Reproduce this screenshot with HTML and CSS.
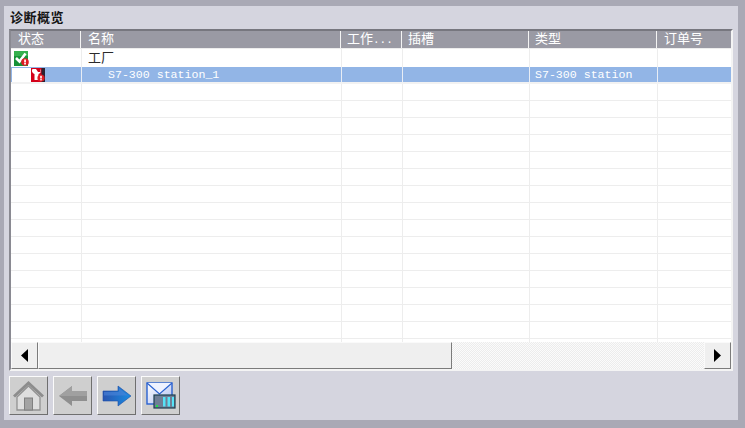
FILE: index.html
```html
<!DOCTYPE html>
<html lang="zh">
<head>
<meta charset="utf-8">
<title>诊断概览</title>
<link rel="stylesheet" href="styles.css">
</head>
<body>
<main class="panel">
  <h1 class="title">诊断概览</h1>
  <section class="table">
    <div class="row head">
      <div class="c c1">状态</div><div class="c c2">名称</div><div class="c c3">工作<span class="dots">...</span></div><div class="c c4">插槽</div><div class="c c5">类型</div><div class="c c6">订单号</div>
    </div>
    <div class="rows">
      <div class="row first">
        <div class="c c1"><svg class="ico" width="15" height="15" viewBox="0 0 15 15"><rect width="14" height="15" fill="#179238"/><rect width="14" height="5" fill="#35b04e"/><path d="M2 7 5.500 10.500 11.500 2.500" fill="none" stroke="#fff" stroke-width="2.600"/><circle cx="11" cy="11" r="3.800" fill="#e01b24"/><rect x="10.200" y="8.500" width="1.700" height="3" fill="#fff"/><rect x="10.200" y="12" width="1.700" height="1.500" fill="#fff"/></svg></div>
        <div class="c c2 cn"><span class="cn-text">工厂</span></div><div class="c c3"></div><div class="c c4"></div><div class="c c5"></div><div class="c c6"></div>
      </div>
      <div class="row sel">
        <div class="c c1"><span class="blank"></span><svg width="14" height="14" viewBox="0 0 14 14"><rect width="14" height="14" fill="#2b2230"/><rect width="10.500" height="14" fill="#d4001a"/><path d="M1.500 1a3.300 3.300 0 0 0 2 5V12h4V6a3.300 3.300 0 0 0 2-5v3H7L5 1z" fill="#fff"/><circle cx="10" cy="10" r="3.600" fill="#e01b24"/><rect x="9.200" y="7.800" width="1.600" height="2.700" fill="#fff"/><rect x="9.200" y="11.100" width="1.600" height="1.300" fill="#fff"/></svg></div>
        <div class="c c2 mono indent">S7-300 station_1</div><div class="c c3"></div><div class="c c4"></div><div class="c c5 mono">S7-300 station</div><div class="c c6"></div>
      </div>
      <div class="row"><div class="c c1"></div><div class="c c2"></div><div class="c c3"></div><div class="c c4"></div><div class="c c5"></div><div class="c c6"></div></div>
      <div class="row"><div class="c c1"></div><div class="c c2"></div><div class="c c3"></div><div class="c c4"></div><div class="c c5"></div><div class="c c6"></div></div>
      <div class="row"><div class="c c1"></div><div class="c c2"></div><div class="c c3"></div><div class="c c4"></div><div class="c c5"></div><div class="c c6"></div></div>
      <div class="row"><div class="c c1"></div><div class="c c2"></div><div class="c c3"></div><div class="c c4"></div><div class="c c5"></div><div class="c c6"></div></div>
      <div class="row"><div class="c c1"></div><div class="c c2"></div><div class="c c3"></div><div class="c c4"></div><div class="c c5"></div><div class="c c6"></div></div>
      <div class="row"><div class="c c1"></div><div class="c c2"></div><div class="c c3"></div><div class="c c4"></div><div class="c c5"></div><div class="c c6"></div></div>
      <div class="row"><div class="c c1"></div><div class="c c2"></div><div class="c c3"></div><div class="c c4"></div><div class="c c5"></div><div class="c c6"></div></div>
      <div class="row"><div class="c c1"></div><div class="c c2"></div><div class="c c3"></div><div class="c c4"></div><div class="c c5"></div><div class="c c6"></div></div>
      <div class="row"><div class="c c1"></div><div class="c c2"></div><div class="c c3"></div><div class="c c4"></div><div class="c c5"></div><div class="c c6"></div></div>
      <div class="row"><div class="c c1"></div><div class="c c2"></div><div class="c c3"></div><div class="c c4"></div><div class="c c5"></div><div class="c c6"></div></div>
      <div class="row"><div class="c c1"></div><div class="c c2"></div><div class="c c3"></div><div class="c c4"></div><div class="c c5"></div><div class="c c6"></div></div>
      <div class="row"><div class="c c1"></div><div class="c c2"></div><div class="c c3"></div><div class="c c4"></div><div class="c c5"></div><div class="c c6"></div></div>
      <div class="row"><div class="c c1"></div><div class="c c2"></div><div class="c c3"></div><div class="c c4"></div><div class="c c5"></div><div class="c c6"></div></div>
      <div class="row"><div class="c c1"></div><div class="c c2"></div><div class="c c3"></div><div class="c c4"></div><div class="c c5"></div><div class="c c6"></div></div>
      <div class="row"><div class="c c1"></div><div class="c c2"></div><div class="c c3"></div><div class="c c4"></div><div class="c c5"></div><div class="c c6"></div></div>
      <div class="row"><div class="c c1"></div><div class="c c2"></div><div class="c c3"></div><div class="c c4"></div><div class="c c5"></div><div class="c c6"></div></div>
    </div>
    <div class="scroll">
      <div class="sbtn"><svg width="8" height="13" viewBox="0 0 8 13"><path d="M7 0v13L0 6.500z" fill="#000"/></svg></div>
      <div class="thumb"></div>
      <div class="track"></div>
      <div class="sbtn"><svg width="8" height="13" viewBox="0 0 8 13"><path d="M0 0v13l7-6.500z" fill="#000"/></svg></div>
    </div>
  </section>
  <nav class="tools">
    <button class="tbtn" aria-label="home"><svg width="31" height="31" viewBox="0 0 31 31"><path d="M15.500 1 0 15.500l2 2L15.500 5 29 17.500l2-2z" fill="#8d8d8d"/><path d="M4 17 15.500 6 27 17v13H4z" fill="#dedede" stroke="#929292" stroke-width="1.300"/><rect x="11.500" y="18" width="8" height="12" fill="#a3a3a3" stroke="#808080"/></svg></button>
    <button class="tbtn" aria-label="back"><svg width="30" height="22" viewBox="0 0 30 22"><path d="M14 1 1 11l13 10v-5h15V6H14z" fill="#8f8f8f"/><path d="M14 1 1 11h28V6H14z" fill="#a0a0a0"/></svg></button>
    <button class="tbtn" aria-label="forward"><svg width="30" height="22" viewBox="0 0 30 22"><defs><linearGradient id="ar" x1="0" x2="1" y1="0" y2="0"><stop offset="0" stop-color="#2a55b0"/><stop offset="1" stop-color="#1a8be0"/></linearGradient></defs><path d="M16 1 29 11 16 21v-5H1V6h15z" fill="url(#ar)" stroke="#1b4fa8" stroke-width=".6"/><path d="M2 7h15V3l9 7.500H2z" fill="#4c84d8" opacity=".6"/></svg></button>
    <button class="tbtn" aria-label="mail"><svg width="30" height="27" viewBox="0 0 30 27"><defs><linearGradient id="en" x1="0" x2="1" y1="0" y2="1"><stop offset="0" stop-color="#fff"/><stop offset="1" stop-color="#aebff0"/></linearGradient></defs><rect x="1" y="1" width="25" height="21" fill="url(#en)" stroke="#2a62d0" stroke-width="1.400"/><path d="M1 1 13.500 12 26 1" fill="#eef2ff" stroke="#2a62d0" stroke-width="1.200"/><rect x="8" y="13" width="21" height="13" fill="#6f7f96" stroke="#1d3f50" stroke-width="1.200"/><rect x="17" y="15" width="2.500" height="9.500" fill="#55e4f8"/><rect x="21.500" y="15" width="2.500" height="9.500" fill="#55e4f8"/><rect x="26" y="15" width="2" height="9.500" fill="#55e4f8"/><rect x="10" y="23" width="2" height="2" fill="#22e04a"/></svg></button>
  </nav>
</main>
</body>
</html>
```

FILE: styles.css
```css
* { box-sizing: border-box; }
html, body { margin: 0; height: 100%; }
body {
  background: #a9a9b5;
  padding: 6px 7px 8px 4px;
  font-family: "Noto Sans CJK SC", "Liberation Sans", sans-serif;
  overflow: hidden;
}
.panel {
  height: 414px;
  background: #d5d5df;
  padding: 0 5px;
  display: flex;
  flex-direction: column;
}
.title {
  margin: 0;
  height: 23px;
  font-size: 13px;
  font-weight: 700;
  letter-spacing: .5px;
  line-height: 21px;
  padding-left: 1px;
  color: #141414;
  flex: none;
}
.table {
  width: 724px;
  height: 342px;
  flex: none;
  background: #fff;
  border-style: solid;
  border-width: 2px;
  border-color: #77777f #f4f4f4 #f4f4f4 #8a8a92;
  display: flex;
  flex-direction: column;
  overflow: hidden;
}
.row {
  display: flex;
  height: 17px;
  flex: none;
  border-bottom: 1px solid #ededed;
}
.row .c {
  border-right: 1px solid #ededed;
  font-size: 13px;
  line-height: 16px;
  white-space: nowrap;
  color: #2a2a2a;
  display: flex;
  align-items: center;
}
.c1 { width: 71px; padding-left: 7px; }
.c2 { width: 260px; padding-left: 6px; }
.c3 { width: 61px; padding-left: 5px; }
.c4 { width: 127px; padding-left: 5px; }
.c5 { width: 128px; padding-left: 5px; }
.c6 { width: 73px; padding-left: 6px; }
.row .c6 { border-right: 0; }
.row.head {
  height: 17px;
  background: #9a9aa4;
  border-bottom: 0;
}
.row.head .c {
  display: block;
  color: #fff;
  border-right: 1px solid #9a9aa4;
  box-shadow: inset -1px 0 #f4f4f4;
  height: 17px;
  line-height: 14px;
}
.row.head .c6 { border-right: 0; box-shadow: none; }
.dots { font-size: 11px; font-family: "Liberation Mono", monospace; }
.rows {
  flex: 1;
  min-height: 0;
  overflow: hidden;
}
.row.first {
  height: 19px;
  border-top: 1px solid #ededed;
  border-bottom: 0;
  background: #fff;
}
.row.first .c1 { padding-left: 3px; align-items: flex-start; padding-top: 2px; }
.cn-text { position: relative; top: -1px; }
.row.sel {
  background: #92b5e6;
  border-bottom: 2px solid #f2f2f2;
}
.row.sel .c {
  color: #fff;
  border-right-color: #e8edf5;
}
.row.sel .c1 { padding-left: 1px; }
.blank {
  width: 19px;
  height: 14px;
  background: #fff;
  flex: none;
}
.mono {
  font-family: "Liberation Mono", monospace;
}
.row .c.mono { font-size: 11.600px; }
.row .c.indent { padding-left: 26px; }
.scroll {
  height: 27px;
  flex: none;
  display: flex;
  background: #f3f3f3;
}
.sbtn {
  width: 27px;
  flex: none;
  display: flex;
  align-items: center;
  justify-content: center;
  background: #efefef;
  border: 1px solid;
  border-color: #fafafa #7b7b7b #7b7b7b #fafafa;
}
.thumb {
  width: 414px;
  flex: none;
  background: #efefef;
  border: 1px solid;
  border-color: #fafafa #7b7b7b #7b7b7b #fafafa;
}
.track {
  flex: 1;
  background: conic-gradient(#ececec 25%, #fbfbfb 0 50%, #ececec 0 75%, #fbfbfb 0) 0 0 / 2px 2px;
}
.tools {
  display: flex;
  gap: 5px;
  margin-top: 5px;
}
.tbtn {
  width: 39px;
  height: 39px;
  padding: 0;
  display: flex;
  align-items: center;
  justify-content: center;
  background: #cfcfcf;
  border: 1px solid;
  border-color: #fbfbfb #6f6f6f #6f6f6f #fbfbfb;
}
```
